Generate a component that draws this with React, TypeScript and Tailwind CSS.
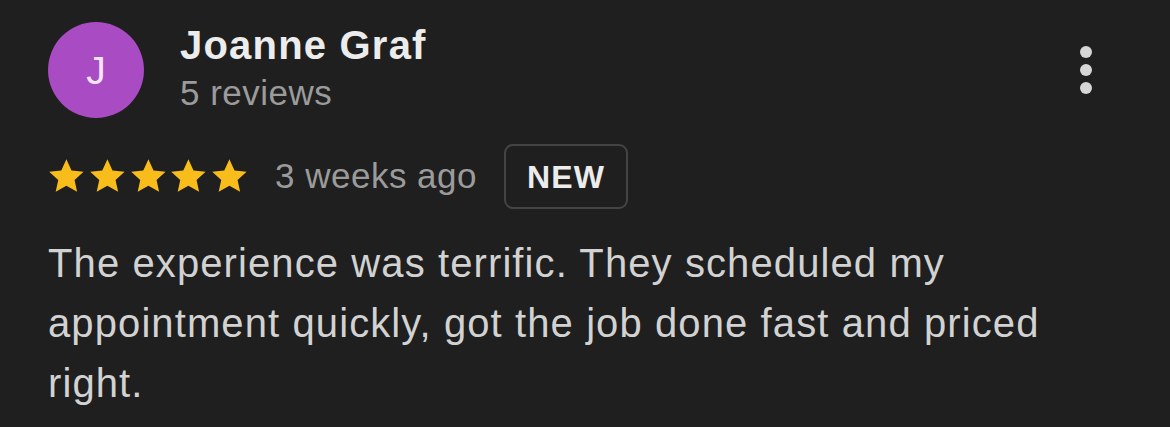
const font = { fontFamily: '"Liberation Sans", Arial, sans-serif' };

function Star() {
  return (
    <svg viewBox="0 0 24 24" className="h-[42px] w-[40.8px]" fill="#f9bd1b">
      <path d="M12 1.6l3 6.55 7.1.77-5.3 4.8 1.5 7L12 17.1l-6.3 3.62 1.5-7-5.3-4.8 7.1-.77z" />
    </svg>
  );
}

export default function App() {
  return (
    <div className="h-[427px] w-[1170px] bg-[#1f1f1f] text-[#d4d4d4]" style={font}>
      <div className="flex items-start justify-between pl-[48px] pr-[78px] pt-[22px]">
        <div className="flex items-center gap-[36px]">
          <div className="flex h-[96px] w-[96px] items-center justify-center rounded-full bg-[#a94bc3] pt-[2px] text-[39px] text-[#f3e6f7]">
            J
          </div>
          <div className="-mt-[2px] flex flex-col">
            <span className="text-[40px] leading-[48px] font-bold tracking-[1.2px] text-[#ececec]">Joanne Graf</span>
            <span className="text-[35px] leading-[48px] tracking-[0.5px] text-[#9b9b9b]">5 reviews</span>
          </div>
        </div>
        <div className="flex flex-col items-center gap-[6px] pt-[24px]">
          <span className="h-[12px] w-[12px] rounded-full bg-[#d6d6d6]" />
          <span className="h-[12px] w-[12px] rounded-full bg-[#d6d6d6]" />
          <span className="h-[12px] w-[12px] rounded-full bg-[#d6d6d6]" />
        </div>
      </div>

      <div className="mt-[26px] flex items-center pl-[46px]">
        <div className="flex items-center">
          <Star />
          <Star />
          <Star />
          <Star />
          <Star />
        </div>
        <span className="ml-[25px] text-[35px] tracking-[0.5px] text-[#9b9b9b]">3 weeks ago</span>
        <span className="ml-[27px] flex h-[65px] items-center rounded-[9px] border-2 border-[#444444] px-[21px] text-[32px] font-bold tracking-[1.2px] text-[#ececec]">
          NEW
        </span>
      </div>

      <p className="mt-[24px] w-[1080px] pl-[48px] text-[40px] leading-[60px] tracking-[1.1px] text-[#d2d2d2]">
        The experience was terrific. They scheduled my appointment quickly, got the job done fast and priced right.
      </p>
    </div>
  );
}
